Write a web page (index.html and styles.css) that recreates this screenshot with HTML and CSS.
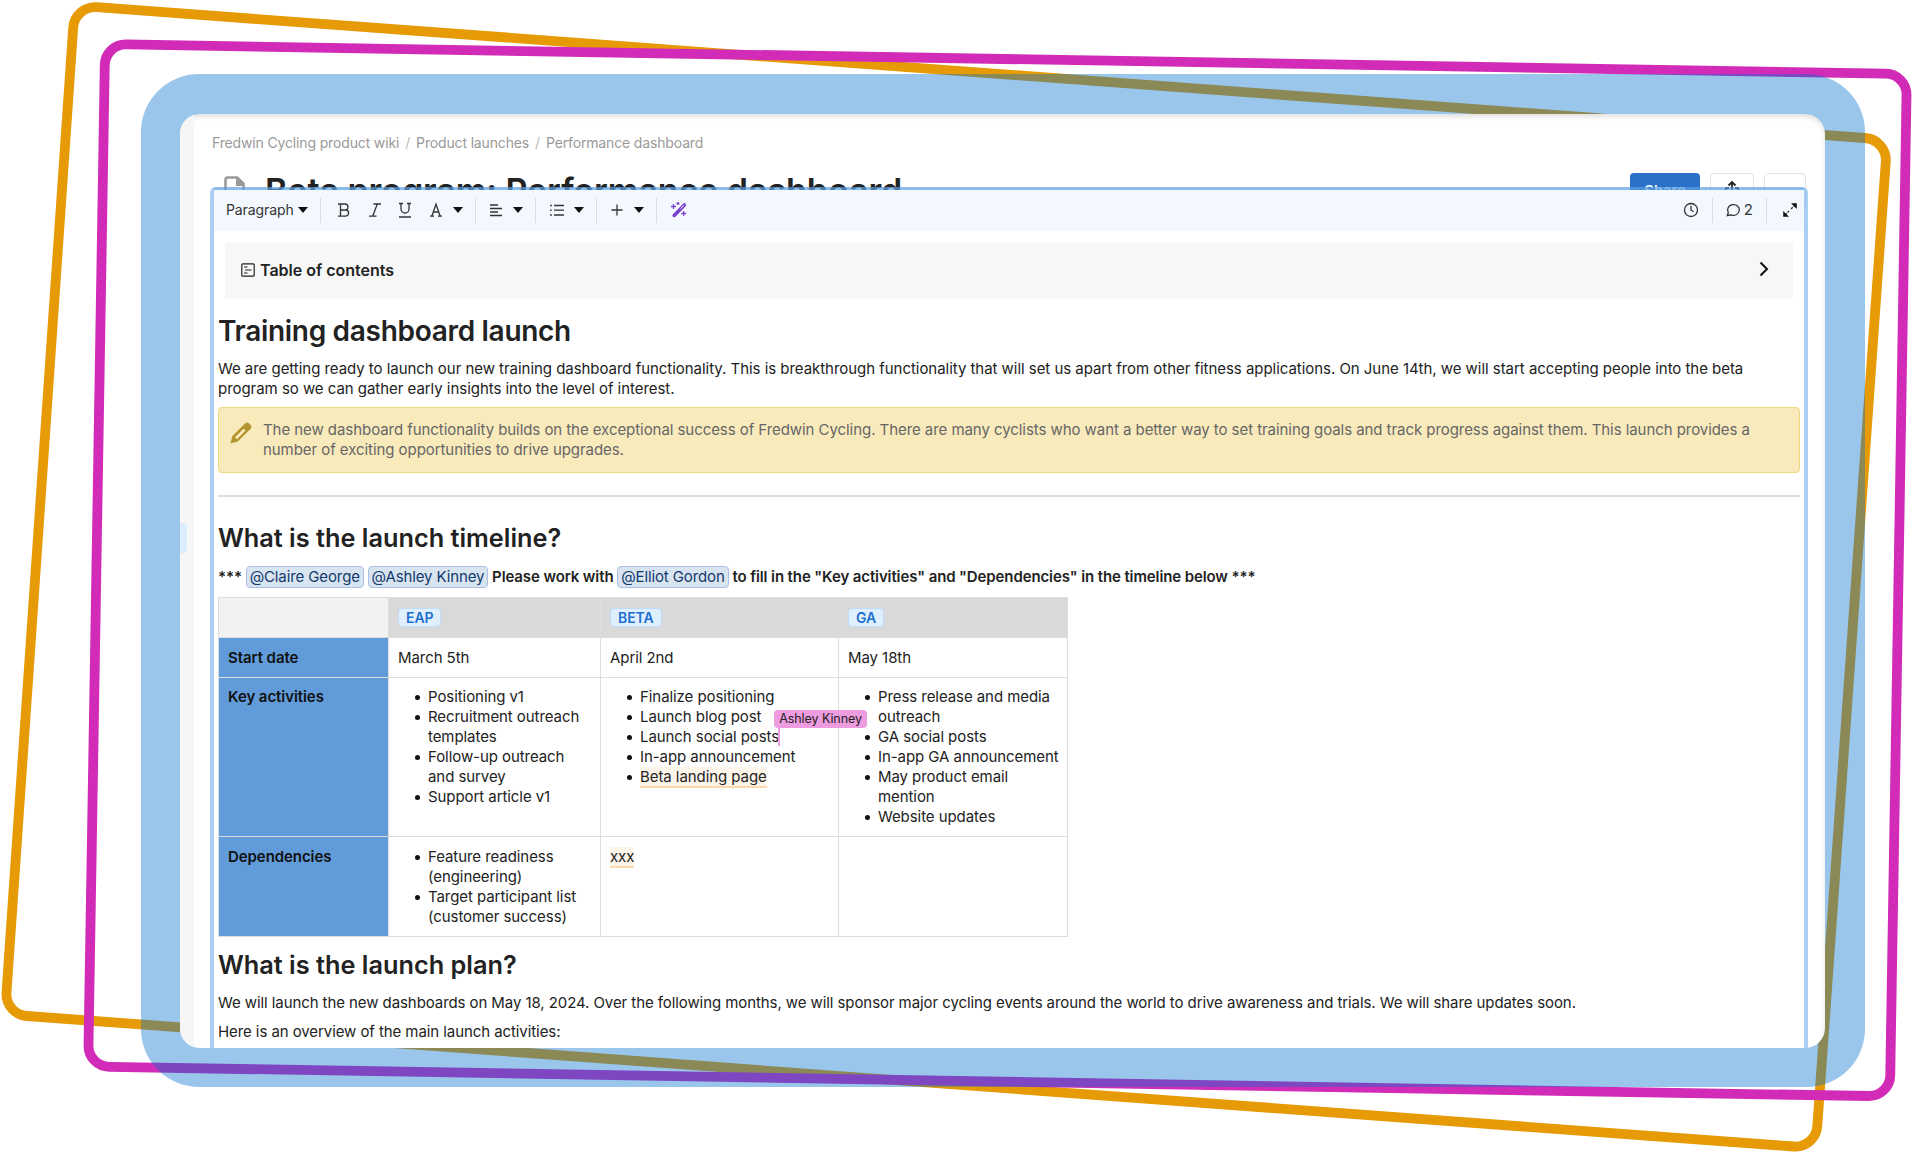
FILE: index.html
```html
<!DOCTYPE html>
<html lang="en">
<head>
  <meta charset="utf-8">
  <title>Beta program: Performance dashboard</title>
  <meta name="viewport" content="width=device-width, initial-scale=1.0">
  <link rel="stylesheet" href="styles.css">
</head>
<body>
  <svg class="frames" width="1919" height="1155" viewBox="0 0 1919 1155">
    <path class="orange" d="M96.8 7.2L1865 138A22 22 0 0 1 1885.8 161.5L1817.3 1126A22 22 0 0 1 1793.5 1146.5L27 1016A22 22 0 0 1 6.5 992.3L73.2 27.6A22 22 0 0 1 96.8 7.2Z"/>
    <rect class="pink" x="96.500" y="59" width="1802" height="1022.5" rx="21" transform="rotate(0.95 998.6 570.2)"/>
  </svg>

  <div class="backdrop">
    <div class="window">
      <div class="sidebar"><span class="handle"></span></div>
      <div class="page">
        <div class="breadcrumbs">
          <span>Fredwin Cycling product wiki</span><i>/</i><span>Product launches</span><i>/</i><span>Performance dashboard</span>
        </div>
        <div class="title-row">
          <svg class="doc-icon" width="21" height="26" viewBox="0 0 21 26"><path d="M1.500 24V3.500a2 2 0 0 1 2-2H13l6.500 6V24" fill="none" stroke="#999" stroke-width="2.500"/><path d="M12 1v9h8.500V8L14 1z" fill="#999"/></svg>
          <h1 class="page-title">Beta program: Performance dashboard</h1>
          <div class="actions">
            <button class="btn share">Share</button>
            <button class="btn export"><svg width="16" height="20" viewBox="0 0 16 20" fill="none" stroke="#222" stroke-width="1.800"><path d="M8 14V2M4.500 5.500L8 2l3.500 3.500M5 8H2v10h12V8h-3"/></svg></button>
            <button class="btn more">···</button>
          </div>
        </div>

        <div class="editor">
          <div class="toolbar">
            <span class="tool style">Paragraph</span><b class="caret"></b>
            <hr class="sep">
            <svg class="t-bold" width="14" height="16" viewBox="0 0 14 16"><path d="M1 2h7a3 3 0 0 1 0 6H3.500h5a3.100 3.100 0 0 1 0 6.200H1M3.500 2v12"/></svg>
            <svg class="t-italic" width="14" height="16" viewBox="0 0 14 16"><path d="M5.500 2H13M1 14.200h7.500M9.300 2L4.700 14.200"/></svg>
            <svg class="t-under" width="14" height="16" viewBox="0 0 14 16"><path d="M1 1.500h4M9 1.500h4M3 1.500V7a4 4 0 0 0 8 0V1.500M1 15h12"/></svg>
            <svg class="t-color" width="14" height="16" viewBox="0 0 14 16"><path d="M1 14.200h4M9 14.200h4M2.800 14.200L7 2.300l4.200 11.900M4.300 10h5.400"/></svg><b class="caret c2"></b>
            <hr class="sep">
            <svg class="t-align" width="14" height="16" viewBox="0 0 14 16"><path d="M1 3h8M1 6.500h12M1 10h8M1 13.500h12"/></svg><b class="caret c3"></b>
            <hr class="sep">
            <svg class="t-list" width="14" height="16" viewBox="0 0 14 16"><path d="M4 3.500h10M4 8.200h10M4 13h10M0 3.500h1.800M0 8.200h1.800M0 13h1.800"/></svg><b class="caret c3"></b>
            <hr class="sep">
            <svg class="t-plus" width="14" height="16" viewBox="0 0 14 16"><path d="M7 2.500v11M1.500 8h11"/></svg><b class="caret c2"></b>
            <hr class="sep">
            <svg class="t-wand" width="16" height="16" viewBox="0 0 16 16"><path d="M3.200 13.400L13.400 3" stroke="#7b42d1" stroke-width="3.600" stroke-linecap="round"/><path d="M9.600 6.600l3.400-3.400" stroke="#f3f8ff" stroke-width="1"/><path d="M2.500 2v5M0 4.500h5M7 0v3M5.500 1.500h3M12.700 9v5M10.200 11.500h5" stroke="#7b42d1" stroke-width="1.300"/></svg>
            <div class="right">
              <svg class="t-clock" width="16" height="16" viewBox="0 0 16 16"><circle cx="8" cy="8" r="6.500"/><path d="M8 3.800V8l2.600 1.800"/></svg>
              <hr class="sep">
              <svg class="t-chat" width="15" height="16" viewBox="0 0 15 16"><path d="M2.300 10.600a5.900 5.400 0 1 1 2.500 2.200L1.300 13.600z"/></svg><span class="tool count">2</span>
              <hr class="sep last">
              <svg class="t-expand" width="16" height="16" viewBox="0 0 16 16"><path d="M9 7l4-4M3 13l4-4" stroke-dasharray="2.500 1"/><path d="M9 1.200h5.800V7zM1.200 9v5.800H7z" fill="#111" stroke="none"/></svg>
            </div>
          </div>

          <div class="content">
            <div class="toc">
              <svg width="14" height="14" viewBox="0 0 14 14" fill="none" stroke="#222" stroke-width="1.200"><rect x=".8" y=".8" width="12.400" height="12.400" rx="1"/><path d="M3 4h3.500M4 7h6.500M3 10h3.500"/></svg>
              <span>Table of contents</span>
              <svg class="chevron" width="10" height="16" viewBox="0 0 10 16"><path d="M1.500 1.500L8 8l-6.500 6.500" fill="none" stroke="#111" stroke-width="2"/></svg>
            </div>
            <h1>Training dashboard launch</h1>
            <p class="intro">We are getting ready to launch our new training dashboard functionality. This is breakthrough functionality that will set us apart from other fitness applications. On June 14th, we will start accepting people into the beta<br>program so we can gather early insights into the level of interest.</p>
            <div class="callout">
              <svg width="22" height="22" viewBox="0 0 22 22"><path d="M.5 21.500l1.700-7.300L14.800 1.800a3.200 3.200 0 0 1 4.600 0l.8.800a3.200 3.200 0 0 1 0 4.600L7.800 19.600z" fill="#b3952f"/><path d="M5 15.300l8.600-8.600 1.900 1.900-8.600 8.600z" fill="#f9eabc"/></svg>
              <p>The new dashboard functionality builds on the exceptional success of Fredwin Cycling. There are many cyclists who want a better way to set training goals and track progress against them. This launch provides a<br>number of exciting opportunities to drive upgrades.</p>
            </div>
            <hr class="divider">
            <h2>What is the launch timeline?</h2>
            <p class="request">*** <span class="mention">@Claire George</span> <span class="mention">@Ashley Kinney</span> Please work with <span class="mention">@Elliot Gordon</span> to fill in the "Key activities" and "Dependencies" in the timeline below ***</p>

            <table>
              <colgroup><col class="col-label"><col class="col-eap"><col class="col-beta"><col class="col-ga"></colgroup>
              <tr class="head">
                <th></th>
                <td><span class="tag">EAP</span></td>
                <td><span class="tag">BETA</span></td>
                <td><span class="tag">GA</span></td>
              </tr>
              <tr class="dates">
                <th>Start date</th>
                <td>March 5th</td>
                <td>April 2nd</td>
                <td>May 18th</td>
              </tr>
              <tr class="activities">
                <th>Key activities</th>
                <td>
                  <ul>
                    <li>Positioning v1</li>
                    <li>Recruitment outreach<br>templates</li>
                    <li>Follow-up outreach<br>and survey</li>
                    <li>Support article v1</li>
                  </ul>
                </td>
                <td>
                  <ul>
                    <li>Finalize positioning</li>
                    <li>Launch blog post</li>
                    <li>Launch social posts<span class="cursor"><span class="cursor-name">Ashley Kinney</span></span></li>
                    <li>In-app announcement</li>
                    <li><span class="marked">Beta landing page</span></li>
                  </ul>
                </td>
                <td>
                  <ul>
                    <li>Press release and media<br>outreach</li>
                    <li>GA social posts</li>
                    <li>In-app GA announcement</li>
                    <li>May product email<br>mention</li>
                    <li>Website updates</li>
                  </ul>
                </td>
              </tr>
              <tr class="deps">
                <th>Dependencies</th>
                <td>
                  <ul>
                    <li>Feature readiness<br>(engineering)</li>
                    <li>Target participant list<br>(customer success)</li>
                  </ul>
                </td>
                <td><span class="marked">xxx</span></td>
                <td></td>
              </tr>
            </table>

            <h2 class="plan">What is the launch plan?</h2>
            <p class="plan-text">We will launch the new dashboards on May 18, 2024. Over the following months, we will sponsor major cycling events around the world to drive awareness and trials. We will share updates soon.</p>
            <p class="plan-text overview">Here is an overview of the main launch activities:</p>
          </div>
        </div>
      </div>
    </div>
  </div>
</body>
</html>
```
FILE: styles.css
```css
* {
  box-sizing: border-box;
}

body {
  margin: 0;
  width: 1919px;
  height: 1155px;
  overflow: hidden;
  background: #fff;
  font-family: Inter, "Liberation Sans", sans-serif;
  font-size: 15px;
  line-height: 20px;
  color: #222;
}

h1, h2, p, ul {
  margin: 0;
}

/* tilted outlines behind the window */
.frames {
  position: absolute;
  top: 0;
  left: 0;
}

.frames .orange {
  fill: none;
  stroke: #e69a05;
  stroke-width: 9.8;
}

.frames .pink {
  fill: none;
  stroke: #d12bb7;
  stroke-width: 9.8;
}

.backdrop {
  position: relative;
  width: 1724px;
  height: 1013px;
  margin: 74px 0 0 141px;
  padding: 40px 39px;
  border-radius: 58px;
  background: rgba(2, 113, 208, 0.4);
}

.window {
  display: flex;
  width: 1645px;
  height: 934px;
  border-radius: 20px;
  overflow: hidden;
  background: #fff;
  box-shadow: inset 0 3px 5px rgba(0, 0, 0, 0.12);
}

.sidebar {
  width: 14px;
  padding-top: 409px;
  background: #f6f6f6;
}

.handle {
  display: block;
  width: 7px;
  height: 30px;
  border-radius: 0 4px 4px 0;
  background: #deecff;
}

.page {
  width: 1631px;
  padding: 19px 17px 0 16px;
}

.breadcrumbs {
  padding-left: 2px;
  font-size: 14px;
  letter-spacing: -0.15px;
  color: #999;
}

.breadcrumbs i {
  font-style: normal;
  color: #bbb;
  margin: 0 6px;
}

.title-row {
  display: flex;
  height: 14px;
  margin-top: 20px;
}

.doc-icon {
  flex: none;
  margin: 3px 0 0 14px;
}

.page-title {
  margin-left: 20px;
  font-size: 34px;
  line-height: 36px;
  font-weight: 600;
  letter-spacing: -0.07px;
  white-space: nowrap;
}

.actions {
  display: flex;
  gap: 10px;
  margin: 0 2px 0 auto;
}

.btn {
  height: 36px;
  padding: 0;
  border: 1px solid #e3e3e3;
  border-radius: 4px;
  background: #fff;
}

.share {
  width: 70px;
  padding-bottom: 2px;
  border: none;
  background: #2c71c9;
  color: #fff;
  font: 500 15px Inter, sans-serif;
}

.export {
  width: 44px;
}

.more {
  width: 42px;
}

.editor {
  position: relative;
  width: 1598px;
  height: 870px;
  border: 4px solid rgba(100, 165, 235, 0.55);
  border-top: 3px solid rgba(90, 160, 225, 0.7);
  border-radius: 6px;
  background: #fff;
  background-clip: padding-box;
}

.toolbar {
  display: flex;
  align-items: center;
  height: 41px;
  padding: 0 0 1px 12px;
  background: #f3f8ff;
}

.toolbar svg {
  fill: none;
  stroke: #333;
  stroke-width: 1.3;
}

.tool {
  font-size: 14px;
  color: #333;
}

.style {
  width: 67px;
  letter-spacing: -0.1px;
}

.caret {
  margin-left: 5px;
  border: 5px solid transparent;
  border-top: 6px solid #111;
  border-bottom: none;
}

.sep {
  width: 1px;
  height: 25px;
  margin: 0 12px;
  border: none;
  background: #ddd;
}

.t-bold { margin-left: 4px; }
.t-italic, .t-color { margin-left: 17px; }
.t-under { margin-left: 16px; }
.t-align, .t-plus { margin-left: 1px; }
.t-list, .t-wand { margin-left: 2px; }
.c2 { margin-left: 10px; }
.c3 { margin-left: 10px; }

.right {
  display: flex;
  align-items: center;
  margin-left: auto;
  padding-right: 6px;
}

.right .sep {
  margin: 0 13px;
}

.right .last {
  margin-right: 15px;
}

.count {
  margin-left: 3px;
  font-size: 15px;
}

.content {
  padding: 12px 4px 0;
}

.toc {
  display: flex;
  align-items: center;
  height: 56px;
  margin: 0 7px;
  padding: 0 24px 2px 16px;
  background: #f7f7f7;
  font-size: 16px;
  font-weight: 600;
}

.toc span {
  margin-left: 5px;
}

.chevron {
  margin: -3px 0 0 auto;
}

.content h1 {
  margin-top: 15px;
  font-size: 28px;
  line-height: 34px;
  font-weight: 600;
  letter-spacing: -0.3px;
}

.content h2 {
  font-size: 25.3px;
  line-height: 30px;
  font-weight: 600;
}

.content p {
  white-space: nowrap;
}

.intro {
  margin-top: 11px;
  letter-spacing: -0.04px;
}

.callout {
  display: flex;
  height: 66px;
  margin-top: 8px;
  padding: 12px 11px;
  border: 1px solid #f0d87e;
  border-radius: 4px;
  background: #f9eabc;
  color: #666;
  letter-spacing: -0.06px;
}

.callout svg {
  margin-top: 2px;
}

.callout p {
  margin-left: 11px;
}

.divider {
  height: 2px;
  margin: 22px 0 26px;
  border: none;
  background: #ddd;
}

.request {
  margin-top: 13px;
  font-weight: 600;
  letter-spacing: -0.11px;
}

.mention {
  display: inline-block;
  padding: 0 3px;
  border: 1px solid #a9c0e4;
  border-radius: 4px;
  background: #d9e4f1;
  color: #123a6d;
  font-weight: 400;
}

table {
  width: 849px;
  margin-top: 9px;
  border-collapse: collapse;
  table-layout: fixed;
  letter-spacing: -0.07px;
}

.col-label { width: 170px; }
.col-eap { width: 212px; }
.col-beta { width: 238px; }
.col-ga { width: 229px; }

th, td {
  padding: 10px 9px 8px;
  border: 1px solid #ddd;
  vertical-align: top;
  text-align: left;
  white-space: nowrap;
}

th {
  background: #629bd9;
  color: #111;
  font-weight: 600;
}

.head { height: 40px; }
.dates { height: 40px; }
.activities { height: 159px; }
.deps { height: 100px; }

.activities th, .activities td { padding-top: 9px; }

.head th { background: #f2f2f2; }
.head td { background: #d9d9d9; }

.tag {
  display: inline-block;
  padding: 0 7px;
  border: 1px solid #c0dcfa;
  border-radius: 4px;
  background: #e0effe;
  color: #1c6fcf;
  font-size: 14px;
  line-height: 17px;
  font-weight: 600;
}

ul {
  padding-left: 30px;
  list-style: none;
}

li {
  position: relative;
}

li::before {
  content: "";
  position: absolute;
  left: -13px;
  top: 8px;
  width: 5px;
  height: 5px;
  border-radius: 50%;
  background: #111;
}

.marked {
  background: #fef5ea;
  border-bottom: 2px solid #fad9ac;
}

.cursor {
  position: relative;
  z-index: 1;
  margin-left: -1px;
  border-left: 2px solid #ee9ce0;
}

.cursor-name {
  position: absolute;
  left: -6px;
  top: -17px;
  padding: 0 5px;
  border-radius: 4px;
  background: #ee9ce0;
  font-size: 12.5px;
  line-height: 18px;
}

.plan {
  margin-top: 13px;
}

.plan-text {
  margin-top: 13px;
  letter-spacing: -0.08px;
}

.overview {
  margin-top: 9px;
}
```
